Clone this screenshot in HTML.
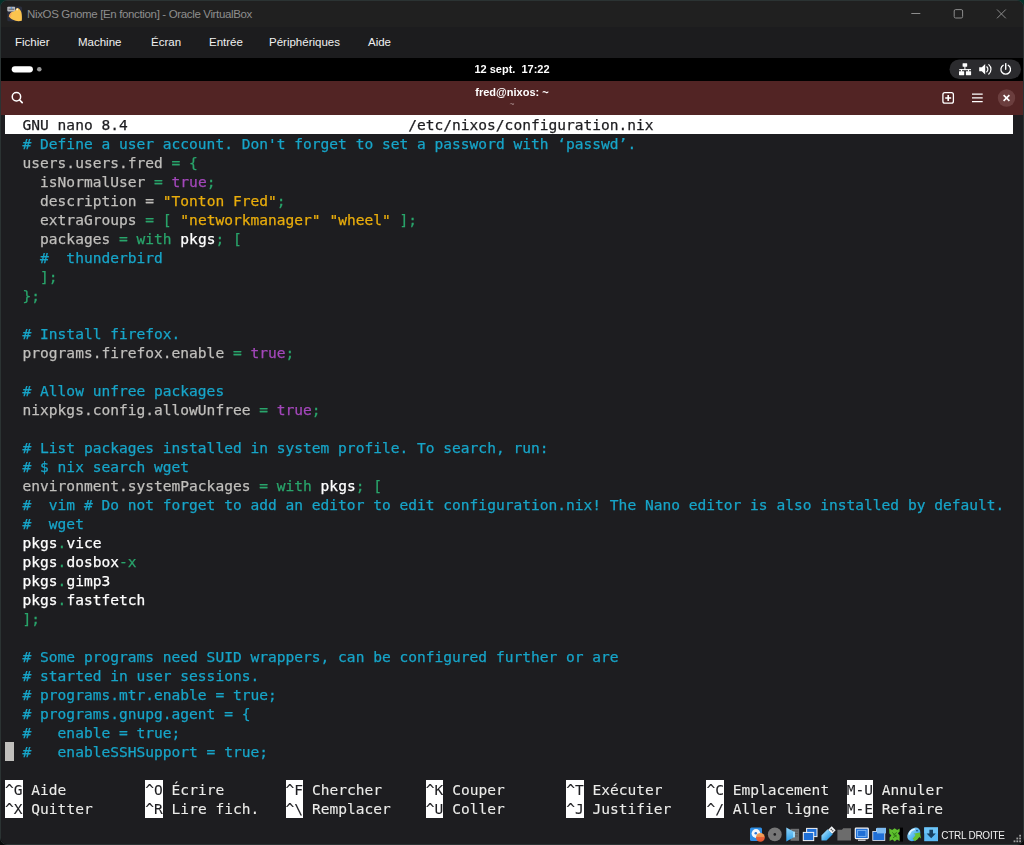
<!DOCTYPE html>
<html lang="fr">
<head>
<meta charset="utf-8">
<title>NixOS Gnome [En fonction] - Oracle VirtualBox</title>
<style>
html,body{margin:0;padding:0;}
body{width:1024px;height:845px;overflow:hidden;background:linear-gradient(#05322a,#0a0c0c);position:relative;font-family:"Liberation Sans",sans-serif;}
#win{position:absolute;left:1px;top:1px;width:1022px;height:843px;background:#1d1d20;border-radius:6px;overflow:hidden;}
#frame{position:absolute;left:0;top:0;width:1022px;height:843px;border:1px solid #2b3333;border-radius:7px;}
#tbar{position:absolute;left:0;top:0;width:100%;height:26px;background:#202020;}
#tbar .t{position:absolute;left:26px;top:6px;font-size:11.5px;letter-spacing:-0.35px;line-height:15px;color:#8e8e8e;white-space:nowrap;}
#mbar{position:absolute;left:0;top:26px;width:100%;height:31px;background:#1c1c1e;}
#mbar span{position:absolute;top:8px;font-size:11.5px;line-height:15px;color:#f0f0f0;white-space:nowrap;}
#gbar{position:absolute;left:0;top:57px;width:100%;height:23px;background:#000;}
#clock{will-change:transform;position:absolute;left:0;width:100%;top:5px;text-align:center;font-size:11px;font-weight:bold;color:#fff;line-height:13px;white-space:pre;}
#hbar{position:absolute;left:0;top:80px;width:100%;height:34px;background:#522424;}
#htitle{will-change:transform;position:absolute;left:0;width:100%;top:5px;text-align:center;font-size:11px;font-weight:bold;color:#fff;line-height:13px;}
#hsub{will-change:transform;position:absolute;left:0;width:100%;top:18px;text-align:center;font-size:8.5px;color:#a98c8c;line-height:10px;}
#term{-webkit-text-stroke:0.25px;will-change:transform;position:absolute;left:4px;top:114px;width:1010px;height:704px;font-family:"DejaVu Sans Mono","Liberation Mono",monospace;font-size:14.56px;letter-spacing:0.008px;color:#c0bfbc;}
.r{position:absolute;left:0;height:19px;line-height:19px;white-space:pre;}
.c{color:#17a5c9}.g{color:#29a56b}.m{color:#a347ba}.y{color:#e9ad0c}.w{color:#fff}
.s{-webkit-text-stroke:0.1px;color:#ececea}
.k{background:#fff;color:#1d1d20;display:inline-block;height:19px;vertical-align:top}
.tb{background:#fff;color:#1d1d20;width:1008px;left:0}
.tb .b{position:absolute;left:403.2px;top:0}
.cur{position:absolute;left:0;top:627px;width:9px;height:19px;background:#c0bfbc}
#sbar{position:absolute;left:0;top:817px;width:100%;height:26px;}
.hk{position:absolute;left:940.3px;top:10.5px;font-size:10px;letter-spacing:-0.27px;line-height:13px;color:#f0f0f0;white-space:nowrap;}
</style>
</head>
<body>
<div id="frame"></div>
<div id="win">
 <div id="tbar"><svg width="1022" height="25" viewBox="1 1 1022 25" style="position:absolute;left:0;top:0">
   <rect x="7.3" y="6.4" width="14.8" height="14.8" rx="1.5" fill="#2b2f3e"/>
   <path d="M8.8 16.6C9.4 14.4 10.6 12.8 12.4 11.8L15.2 10.6C15.8 9 16.6 7.8 17.8 8C19.6 8.6 20.8 10.4 21.4 12.4C22 15 22 18 21.8 20.8C19.6 21.3 17.4 21.3 15.6 20.8C13 20.2 10.4 18.8 8.8 16.6Z" fill="#fbc44e"/>
   <path d="M8.8 16.4c0.4-1.6 1.2-3 2.4-4.2l0.8 0.4c-0.6 1.6-1 3.2-1.2 5z" fill="#f6a85c"/>
   <rect x="7.3" y="6.8" width="7.8" height="4.6" rx="0.8" fill="#b9babd"/>
   <rect x="8.6" y="8.6" width="5.6" height="1.3" fill="#6d6f78"/>
   <circle cx="11.4" cy="8" r="0.8" fill="#3b86d8"/>
   <circle cx="17.2" cy="9.4" r="0.9" fill="#fff7e6"/>
   <g fill="none" stroke="#8c8c8c" stroke-width="1">
    <path d="M911.3 13.5h9"/>
    <rect x="954.2" y="9.6" width="8.4" height="8.4" rx="1.4"/>
    <path d="M997 9.5l8.8 8.8M1005.8 9.5l-8.8 8.8"/>
   </g>
  </svg><div class="t">NixOS Gnome [En fonction] - Oracle VirtualBox</div></div>
 <div id="mbar">
  <span style="left:14px">Fichier</span><span style="left:77px">Machine</span><span style="left:150px">Écran</span><span style="left:208px">Entrée</span><span style="left:268px">Périphériques</span><span style="left:367px">Aide</span>
 </div>
 <div id="gbar"><svg width="1022" height="23" viewBox="1 58 1022 23" style="position:absolute;left:0;top:0">
   <rect x="11.7" y="66.2" width="21.2" height="6.3" rx="3.15" fill="#fff"/>
   <circle cx="39.3" cy="69.3" r="2.3" fill="#9a9a9a"/>
   <rect x="949.5" y="59.5" width="71.5" height="19.5" rx="9.75" fill="#2b2b2e"/>
   <g fill="#fff">
    <rect x="962.6" y="63.3" width="4.6" height="3.4" rx="0.4"/>
    <rect x="964.4" y="66" width="1" height="4"/>
    <rect x="959.2" y="69.1" width="11.8" height="1.1"/>
    <rect x="961" y="69.5" width="1" height="2.2"/><rect x="968" y="69.5" width="1" height="2.2"/>
    <rect x="959" y="71.2" width="5.2" height="4" rx="0.4"/>
    <rect x="965.9" y="71.2" width="5.2" height="4" rx="0.4"/>
    <path d="M979.2 67.3h2.6l3.4-3.2v10.4l-3.4-3.2h-2.6z"/>
   </g>
   <g fill="none" stroke="#fff" stroke-width="1.2" stroke-linecap="round">
    <path d="M986.8 66.8a3.4 3.4 0 0 1 0 5"/>
    <path d="M988.8 64.6a6.2 6.2 0 0 1 0 9.4"/>
    <path d="M1003.2 65.3a4.8 4.8 0 1 0 5 0" stroke-width="1.3"/>
    <path d="M1005.7 63.6v5.6" stroke-width="1.4"/>
   </g>
  </svg><div id="clock">12 sept.  17:22</div></div>
 <div id="hbar"><svg width="1022" height="34" viewBox="1 81 1022 34" style="position:absolute;left:0;top:0">
   <g fill="none" stroke="#fff">
    <circle cx="16.45" cy="96.8" r="4.2" stroke-width="1.5"/>
    <path d="M19.6 100l2.6 2.6" stroke-width="1.7" stroke-linecap="round"/>
    <rect x="942.9" y="92.7" width="10.5" height="10.5" rx="2" stroke-width="1.3"/>
    <path d="M945.2 98h6M948.2 95v6" stroke-width="1.6"/>
    <path d="M972 94.1h10.7M972 97.9h10.7M972 101.7h10.7" stroke-width="1.3"/>
   </g>
   <circle cx="1006.5" cy="98" r="8.7" fill="#6b3e3e"/>
   <path d="M1003.6 95.1l5.8 5.8M1009.4 95.1l-5.8 5.8" stroke="#fff" stroke-width="1.6" fill="none"/>
  </svg><div id="htitle">fred@nixos: ~</div><div id="hsub">~</div></div>
 <div id="term">
  <div class="r tb" style="top:0"><span class="a">  GNU nano 8.4</span><span class="b">/etc/nixos/configuration.nix</span></div>
  <div class="r" style="top:19px"><span class="c">  # Define a user account. Don't forget to set a password with ‘passwd’.</span></div>
  <div class="r" style="top:38px">  users.users.fred <span class="g">= {</span></div>
  <div class="r" style="top:57px">    isNormalUser <span class="g">= </span><span class="m">true</span><span class="g">;</span></div>
  <div class="r" style="top:76px">    description = <span class="y">"Tonton Fred"</span><span class="g">;</span></div>
  <div class="r" style="top:95px">    extraGroups <span class="g">= [ </span><span class="y">"networkmanager"</span> <span class="y">"wheel"</span><span class="g"> ];</span></div>
  <div class="r" style="top:114px">    packages <span class="g">= with </span><span class="w">pkgs</span><span class="g">; [</span></div>
  <div class="r" style="top:133px"><span class="c">    #  thunderbird</span></div>
  <div class="r" style="top:152px"><span class="g">    ];</span></div>
  <div class="r" style="top:171px"><span class="g">  };</span></div>
  <div class="r" style="top:209px"><span class="c">  # Install firefox.</span></div>
  <div class="r" style="top:228px">  programs.firefox.enable <span class="g">= </span><span class="m">true</span><span class="g">;</span></div>
  <div class="r" style="top:266px"><span class="c">  # Allow unfree packages</span></div>
  <div class="r" style="top:285px">  nixpkgs.config.allowUnfree <span class="g">= </span><span class="m">true</span><span class="g">;</span></div>
  <div class="r" style="top:323px"><span class="c">  # List packages installed in system profile. To search, run:</span></div>
  <div class="r" style="top:342px"><span class="c">  # $ nix search wget</span></div>
  <div class="r" style="top:361px">  environment.systemPackages <span class="g">= with </span><span class="w">pkgs</span><span class="g">; [</span></div>
  <div class="r" style="top:380px"><span class="c">  #  vim # Do not forget to add an editor to edit configuration.nix! The Nano editor is also installed by default.</span></div>
  <div class="r" style="top:399px"><span class="c">  #  wget</span></div>
  <div class="r" style="top:418px"><span class="w">  pkgs</span><span class="g">.</span><span class="w">vice</span></div>
  <div class="r" style="top:437px"><span class="w">  pkgs</span><span class="g">.</span><span class="w">dosbox</span><span class="g">-x</span></div>
  <div class="r" style="top:456px"><span class="w">  pkgs</span><span class="g">.</span><span class="w">gimp3</span></div>
  <div class="r" style="top:475px"><span class="w">  pkgs</span><span class="g">.</span><span class="w">fastfetch</span></div>
  <div class="r" style="top:494px"><span class="g">  ];</span></div>
  <div class="r" style="top:532px"><span class="c">  # Some programs need SUID wrappers, can be configured further or are</span></div>
  <div class="r" style="top:551px"><span class="c">  # started in user sessions.</span></div>
  <div class="r" style="top:570px"><span class="c">  # programs.mtr.enable = true;</span></div>
  <div class="r" style="top:589px"><span class="c">  # programs.gnupg.agent = {</span></div>
  <div class="r" style="top:608px"><span class="c">  #   enable = true;</span></div>
  <div class="r" style="top:627px"><span class="c">  #   enableSSHSupport = true;</span></div>
  <div class="cur"></div>
  <div class="r w s" style="top:665px"><span class="k">^G</span> Aide         <span class="k">^O</span> Écrire       <span class="k">^F</span> Chercher     <span class="k">^K</span> Couper       <span class="k">^T</span> Exécuter     <span class="k">^C</span> Emplacement  <span class="k">M-U</span> Annuler</div>
  <div class="r w s" style="top:684px"><span class="k">^X</span> Quitter      <span class="k">^R</span> Lire fich.   <span class="k">^\</span> Remplacer    <span class="k">^U</span> Coller       <span class="k">^J</span> Justifier    <span class="k">^/</span> Aller ligne  <span class="k">M-E</span> Refaire</div>
 </div>
 <div id="sbar"><svg width="1022" height="26" viewBox="1 818 1022 26" style="position:absolute;left:0;top:0">
   <defs>
    <linearGradient id="lb" x1="0" y1="0" x2="0" y2="1"><stop offset="0" stop-color="#8fd4fb"/><stop offset="1" stop-color="#2f9fe8"/></linearGradient>
    <linearGradient id="or" x1="0" y1="0" x2="0" y2="1"><stop offset="0" stop-color="#f3a55a"/><stop offset="0.5" stop-color="#ef8e4e"/><stop offset="0.5" stop-color="#e8623a"/><stop offset="1" stop-color="#e4572f"/></linearGradient>
   </defs>
   <!-- 1 hdd -->
   <rect x="750" y="827.6" width="12" height="13.4" rx="1.5" fill="#2f8fe6"/>
   <circle cx="756" cy="833.5" r="4.4" fill="#f4f7fb"/>
   <circle cx="755.8" cy="833.2" r="1.3" fill="#2f78d4"/>
   <circle cx="760.4" cy="837.4" r="4.4" fill="url(#or)"/>
   <!-- 2 cd -->
   <circle cx="774.8" cy="834.4" r="6.9" fill="#777"/>
   <circle cx="774.8" cy="834.4" r="1.3" fill="#1d1d20"/>
   <!-- 3 audio -->
   <rect x="790.5" y="828.8" width="8.6" height="12" fill="#6f7072"/>
   <path d="M792 831h6M792 833.5h6M792 836h6" stroke="#5a5b5d" stroke-width="1"/>
   <path d="M786.3 827.6l7.2 4v5.8l-7.2 4z" fill="url(#lb)"/>
   <rect x="793" y="831.6" width="2" height="5.8" fill="#9fdcfb"/>
   <!-- 4 network -->
   <rect x="806.6" y="828.4" width="10.4" height="8.2" fill="#1f6fd6" stroke="#f2f4f7" stroke-width="1"/>
   <rect x="803.3" y="832.4" width="10.4" height="8.2" fill="#1f6fd6" stroke="#f2f4f7" stroke-width="1"/>
   <!-- 5 usb -->
   <g transform="rotate(-45 827.5 834.5)">
    <rect x="831" y="831.7" width="5.2" height="5.6" fill="#f4f6f8"/>
    <rect x="833" y="833" width="1.6" height="1.2" fill="#555"/><rect x="833" y="835" width="1.6" height="1.2" fill="#555"/>
    <path d="M819 834.5l3.5-3.6h8.8v7.2h-8.8z" fill="url(#lb)"/>
   </g>
   <!-- 6 folder -->
   <path d="M837.4 829.8h4.6l1.2-1.6h7.8v12.2h-13.6z" fill="#6c6c6c"/>
   <!-- 7 display -->
   <rect x="855.3" y="828.2" width="13" height="10.4" rx="0.8" fill="#1f6fd6" stroke="#f2f4f7" stroke-width="1.2"/>
   <rect x="857.6" y="830.4" width="8.4" height="6" fill="none" stroke="#7db6f2" stroke-width="0.9"/>
   <rect x="858" y="839.6" width="7.6" height="1.2" fill="#e8eaee"/>
   <!-- 8 recording -->
   <rect x="872.8" y="831.4" width="12" height="9" fill="#1f6fd6" stroke="#e8eef6" stroke-width="0.8"/>
   <rect x="877" y="827.8" width="9" height="5.6" fill="#7ebcf3"/>
   <rect x="876" y="828.2" width="1" height="3.4" fill="#9fd0f8"/>
   <!-- 9 cpu green -->
   <rect x="899.6" y="827.6" width="3.4" height="14" fill="#000"/>
   <path d="M889.2 828.4l3 1.6 2.4-1.8 2.6 1.8 2.4-1.6v3.2l-1.8 1.6 1.8 2.2v5.6l-2.6-1.4-2.2 1.8-2.4-1.8-2.8 1.4v-3.4l1.8-2-2-2.2z" fill="#5fc02e"/>
   <path d="M892.4 832.4l4.4 5M896.8 832.4l-3.2 2.4 2.8 0.6-3.4 2.4" stroke="#2f7d14" stroke-width="1" fill="none"/>
   <!-- 10 mouse -->
   <ellipse cx="913.8" cy="834.4" rx="7.6" ry="5.6" transform="rotate(-48 913.8 834.4)" fill="url(#lb)"/>
   <path d="M909.2 834.6c0.6-3 2.8-5 5.6-5.4" stroke="#e4f5ff" stroke-width="1.5" fill="none"/>
   <circle cx="917" cy="830.6" r="0.9" fill="#1d4f8a"/>
   <path d="M912.6 838.6c1.4-1.2 2.4-2.2 3-3.8l-2-1 6.4-1.2 1 6-1.8-1.6c-1 1.8-2.4 3.2-4.4 4.2z" fill="#67c132"/>
   <!-- 11 keyboard -->
   <rect x="924.2" y="827.4" width="13.8" height="13.8" fill="#5bb9f3"/>
   <rect x="924.2" y="827.4" width="13.8" height="6" fill="#6cc4f7"/>
   <path d="M929.4 829.8h3.6v3.6h2.8l-4.6 4.8-4.6-4.8h2.8z" fill="#17405f"/>
   <!-- grip -->
   <g fill="#a0a0a0">
    <rect x="1019.2" y="834.8" width="1.8" height="1.8"/>
    <rect x="1016.4" y="837.6" width="1.8" height="1.8"/><rect x="1019.2" y="837.6" width="1.8" height="1.8"/>
    <rect x="1013.6" y="840.4" width="1.8" height="1.8"/><rect x="1016.4" y="840.4" width="1.8" height="1.8"/><rect x="1019.2" y="840.4" width="1.8" height="1.8"/>
   </g>
  </svg><div class="hk">CTRL DROITE</div></div>
</div>
</body>
</html>
